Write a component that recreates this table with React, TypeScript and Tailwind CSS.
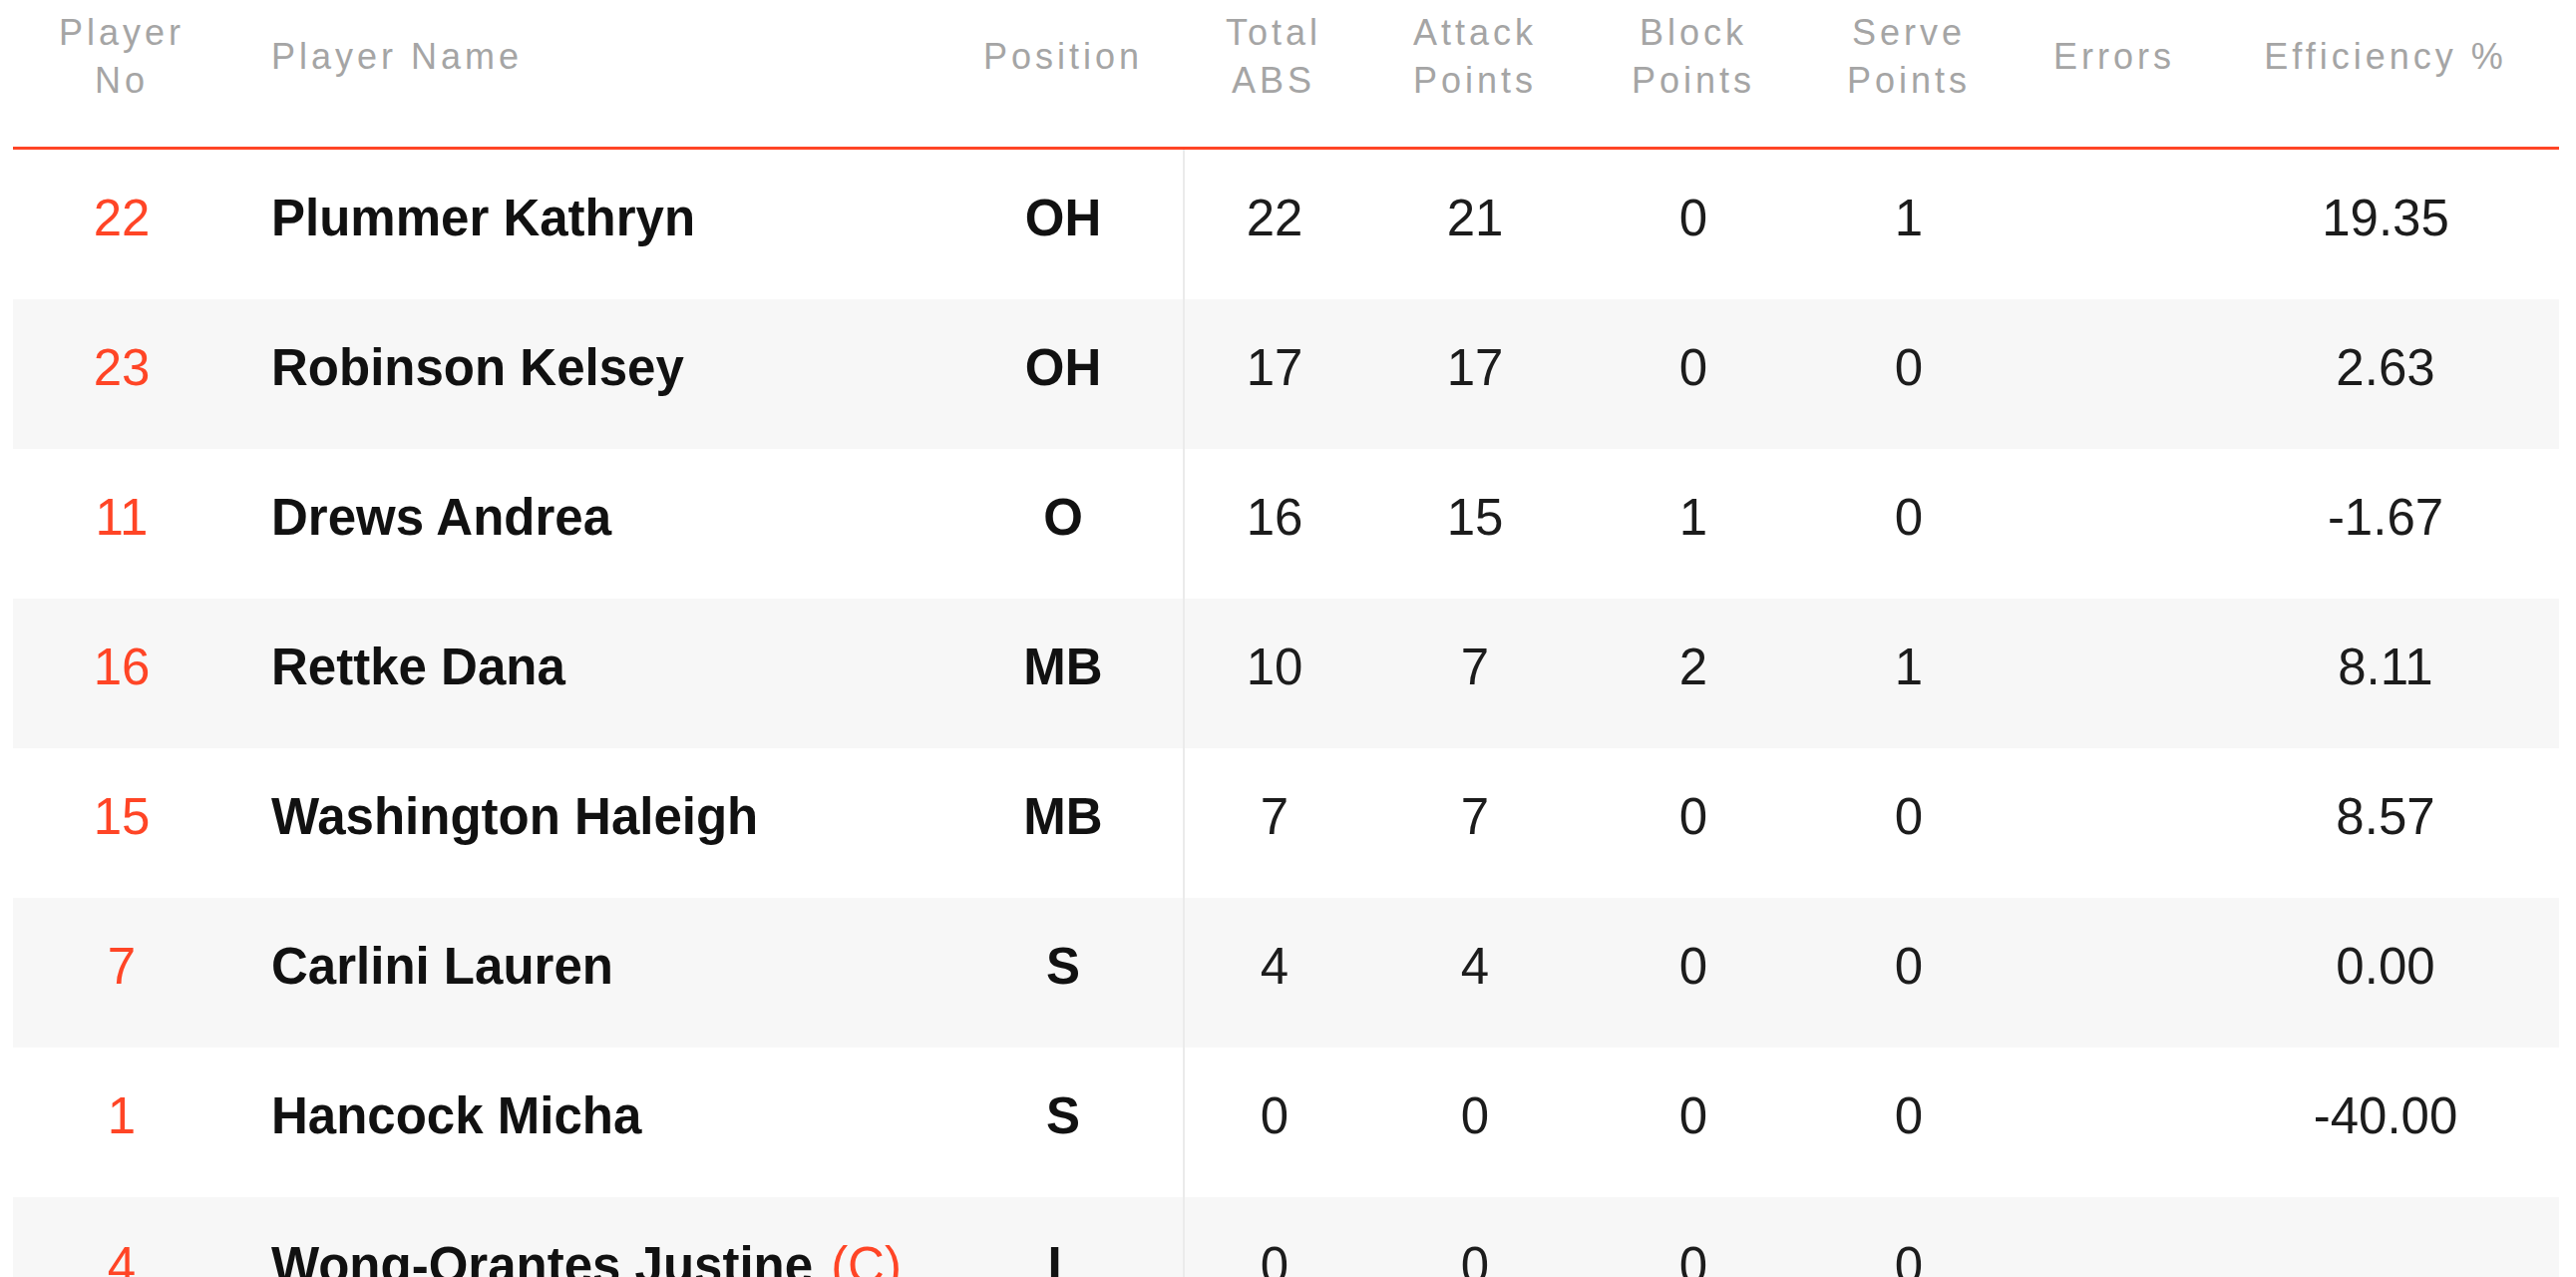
import React from "react";

type Player = {
  no: number;
  name: string;
  captain?: boolean;
  pos: string;
  abs: number;
  atk: number;
  blk: number;
  srv: number;
  err: string;
  eff: string;
};

const players: Player[] = [
  { no: 22, name: "Plummer Kathryn", pos: "OH", abs: 22, atk: 21, blk: 0, srv: 1, err: "", eff: "19.35" },
  { no: 23, name: "Robinson Kelsey", pos: "OH", abs: 17, atk: 17, blk: 0, srv: 0, err: "", eff: "2.63" },
  { no: 11, name: "Drews Andrea", pos: "O", abs: 16, atk: 15, blk: 1, srv: 0, err: "", eff: "-1.67" },
  { no: 16, name: "Rettke Dana", pos: "MB", abs: 10, atk: 7, blk: 2, srv: 1, err: "", eff: "8.11" },
  { no: 15, name: "Washington Haleigh", pos: "MB", abs: 7, atk: 7, blk: 0, srv: 0, err: "", eff: "8.57" },
  { no: 7, name: "Carlini Lauren", pos: "S", abs: 4, atk: 4, blk: 0, srv: 0, err: "", eff: "0.00" },
  { no: 1, name: "Hancock Micha", pos: "S", abs: 0, atk: 0, blk: 0, srv: 0, err: "", eff: "-40.00" },
  { no: 4, name: "Wong-Orantes Justine", captain: true, pos: "L", abs: 0, atk: 0, blk: 0, srv: 0, err: "", eff: "" },
];

const cols = "grid grid-cols-[218px_715px_240px_182px_222px_216px_216px_196px_348px]";

export default function App() {
  return (
    <div className="min-h-screen bg-white pl-[13px] font-['Liberation_Sans',Arial,sans-serif]">
      <div className="w-[2553px]">
        {/* Header */}
        <div
          className={`${cols} items-center pt-[9px] pb-[42px] border-b-[3px] border-[#ff4526] text-[36px] leading-[48px] tracking-[4px] text-[#a5a5a5]`}
        >
          <div className="text-center">Player<br />No</div>
          <div className="pl-[41px]">Player Name</div>
          <div className="text-center">Position</div>
          <div className="text-center">Total<br />ABS</div>
          <div className="text-center">Attack<br />Points</div>
          <div className="text-center">Block<br />Points</div>
          <div className="text-center">Serve<br />Points</div>
          <div className="text-center">Errors</div>
          <div className="text-center">Efficiency %</div>
        </div>

        {/* Rows */}
        {players.map((p, idx) => (
          <div
            key={p.no}
            className={`${cols} h-[150px] text-[51px] text-[#1c1c1c] ${idx % 2 === 1 ? "bg-[#f7f7f7]" : "bg-white"}`}
          >
            <div className="flex items-center justify-center pb-[11px] text-[#ff4526]">{p.no}</div>
            <div className="flex items-center pl-[41px] pb-[11px] font-bold text-[#111]">
              {p.name}
              {p.captain && <span className="ml-[18px] font-normal text-[#ff4526]">(C)</span>}
            </div>
            <div className="flex items-center justify-center pb-[11px] font-bold text-[#111]">{p.pos}</div>
            <div className="flex items-center justify-center pb-[11px] border-l-2 border-[#ebebeb]">{p.abs}</div>
            <div className="flex items-center justify-center pb-[11px]">{p.atk}</div>
            <div className="flex items-center justify-center pb-[11px]">{p.blk}</div>
            <div className="flex items-center justify-center pb-[11px]">{p.srv}</div>
            <div className="flex items-center justify-center pb-[11px]">{p.err}</div>
            <div className="flex items-center justify-center pb-[11px]">{p.eff}</div>
          </div>
        ))}
      </div>
    </div>
  );
}
